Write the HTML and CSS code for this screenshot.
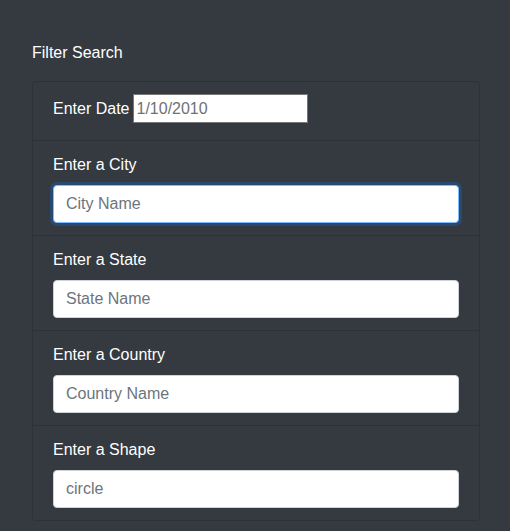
FILE: index.html
```html
<!DOCTYPE html>
<html>
<head>
<meta charset="utf-8">
<link rel="stylesheet" href="styles.css">
</head>
<body>
<div class="panel">
  <div class="title">Filter Search</div>
  <ul class="list">
    <li class="item item-first">
      <label class="inline-label" for="date">Enter Date</label>
      <input class="date-input" id="date" type="text" placeholder="1/10/2010">
    </li>
    <li class="item">
      <label class="label" for="city">Enter a City</label>
      <input class="field focused" id="city" type="text" placeholder="City Name">
    </li>
    <li class="item">
      <label class="label" for="state">Enter a State</label>
      <input class="field" id="state" type="text" placeholder="State Name">
    </li>
    <li class="item">
      <label class="label" for="country">Enter a Country</label>
      <input class="field" id="country" type="text" placeholder="Country Name">
    </li>
    <li class="item">
      <label class="label" for="shape">Enter a Shape</label>
      <input class="field" id="shape" type="text" placeholder="circle">
    </li>
  </ul>
</div>
</body>
</html>
```
FILE: styles.css
```css
html, body {
  margin: 0;
  padding: 0;
  background: #343a40;
}
body {
  font-family: "Liberation Sans", Arial, sans-serif;
  font-size: 16px;
  line-height: 24px;
  color: #fff;
}
.panel {
  padding: 41px 30px 0 32px;
}
.title {
  margin-bottom: 16px;
}
.list {
  list-style: none;
  margin: 0;
  padding: 0;
  width: 448px;
  box-sizing: border-box;
}
.item {
  display: flex;
  flex-direction: column;
  padding: 12px 20px;
  border: 1px solid rgba(0,0,0,0.125);
  border-top-width: 0;
}
.item:first-child {
  border-top-width: 1px;
  border-radius: 4px 4px 0 0;
}
.item:last-child {
  border-radius: 0 0 4px 4px;
}
.item-first {
  flex-direction: row;
  align-items: center;
  padding-bottom: 17px;
}
.inline-label {
  margin-right: 4px;
}
.date-input {
  width: 175px;
  height: 29px;
  box-sizing: border-box;
  border: 1px solid #767676;
  padding: 1px 2px;
  font-family: inherit;
  font-size: 16px;
  color: #000;
  background: #fff;
  outline: none;
}
.date-input::placeholder {
  color: #717171;
}
.label {
  margin-bottom: 8px;
}
.field {
  height: 38px;
  box-sizing: border-box;
  width: 100%;
  padding: 6px 12px;
  font-family: inherit;
  font-size: 16px;
  color: #495057;
  background: #fff;
  border: 1px solid #ced4da;
  border-radius: 4px;
  outline: none;
}
.field::placeholder {
  color: #6c757d;
}
.focused {
  border-color: #80bdff;
  box-shadow: 0 0 0 3px rgba(0,123,255,0.25);
}
```
